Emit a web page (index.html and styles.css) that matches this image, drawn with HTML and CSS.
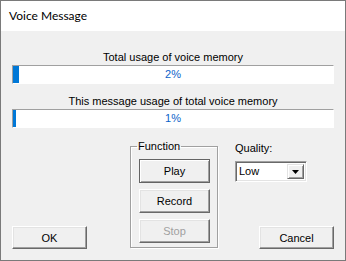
FILE: index.html
```html
<!DOCTYPE html>
<html>
<head>
<meta charset="utf-8">
<link rel="stylesheet" href="styles.css">
</head>
<body>
<div class="window">
  <div class="titlebar">Voice Message</div>
  <div class="content">
    <div class="label first">Total usage of voice memory</div>
    <div class="progress">
      <div class="fill" style="width: 2%"></div>
      <div class="pct">2%</div>
    </div>
    <div class="label second">This message usage of total voice memory</div>
    <div class="progress">
      <div class="fill" style="width: 1%"></div>
      <div class="pct">1%</div>
    </div>
    <div class="bottom">
      <button class="btn wide ok">OK</button>
      <fieldset class="group">
        <legend>Function</legend>
        <div class="group-buttons">
          <button class="btn fn default">Play</button>
          <button class="btn fn">Record</button>
          <button class="btn fn disabled">Stop</button>
        </div>
      </fieldset>
      <div class="right">
        <div class="qlabel">Quality:</div>
        <div class="combo">
          <div class="combo-value">Low</div>
          <div class="combo-btn">
            <svg width="7" height="4" viewBox="0 0 7 4"><path d="M0 0H7L3.5 4Z" fill="#000"/></svg>
          </div>
        </div>
        <button class="btn wide cancel">Cancel</button>
      </div>
    </div>
  </div>
</div>
</body>
</html>
```
FILE: styles.css
```css
html, body {
  margin: 0;
  padding: 0;
}
body {
  font-family: "Liberation Sans", Arial, sans-serif;
  font-size: 11px;
  color: #000;
}
.window {
  width: 346px;
  height: 261px;
  box-sizing: border-box;
  border: 1px solid #7a7a7a;
  background: #f0f0f0;
  display: flex;
  flex-direction: column;
}
.titlebar {
  height: 30px;
  line-height: 30px;
  background: #fff;
  padding-left: 8px;
  font-family: Lato, "Liberation Sans", sans-serif;
  font-size: 12px;
  color: #000;
}
.content {
  flex: 1;
  display: flex;
  flex-direction: column;
  padding: 0 11px 11px 11px;
}
.label {
  text-align: center;
  line-height: 13px;
  height: 13px;
  margin-bottom: 1px;
}
.label.first {
  margin-top: 20px;
}
.label.second {
  margin-top: 11px;
}
.progress {
  height: 19px;
  box-sizing: border-box;
  border-top: 1px solid #a0a0a0;
  border-left: 1px solid #a0a0a0;
  border-bottom: 1px solid #fff;
  border-right: 1px solid #fff;
  background: #fff;
  display: grid;
}
.progress > * {
  grid-area: 1 / 1;
}
.fill {
  background: #0078d7;
  min-width: 3px;
}
.pct {
  text-align: center;
  line-height: 17px;
  color: #0b63c9;
}
.bottom {
  flex: 1;
  display: flex;
  margin-top: 12px;
}
.btn {
  font-family: "Liberation Sans", Arial, sans-serif;
  font-size: 11px;
  color: #000;
  background: #f0f0f0;
  box-sizing: border-box;
  margin: 0;
  padding: 0;
  border-top: 1px solid #fff;
  border-left: 1px solid #fff;
  border-right: 1px solid #696969;
  border-bottom: 1px solid #696969;
  box-shadow: inset -1px -1px 0 #a0a0a0, inset 1px 1px 0 #e3e3e3;
}
.btn.wide {
  width: 75px;
  height: 23px;
}
.ok {
  align-self: flex-end;
}
.group {
  margin: 0 0 1px 43px;
  width: 88px;
  box-sizing: border-box;
  border: 1px solid #a0a0a0;
  box-shadow: 1px 1px 0 #fff, inset 1px 1px 0 #fff;
  padding: 6px 7px 4px 8px;
  min-width: 0;
}
.group legend {
  padding: 0 1px;
  margin-left: -2px;
  line-height: 13px;
}
.group-buttons {
  display: flex;
  flex-direction: column;
  gap: 6px;
}
.btn.fn {
  width: 71px;
  height: 24px;
}
.btn.default {
  border: 1px solid #646464;
  box-shadow: inset 1px 1px 0 #fff, inset -1px -1px 0 #a0a0a0;
}
.btn.disabled {
  color: #a0a0a0;
}
.right {
  margin-left: 17px;
  flex: 1;
  display: flex;
  flex-direction: column;
}
.qlabel {
  margin-top: 2px;
  line-height: 13px;
}
.combo {
  margin-top: 6px;
  width: 72px;
  height: 21px;
  box-sizing: border-box;
  border-top: 1px solid #a0a0a0;
  border-left: 1px solid #a0a0a0;
  border-right: 1px solid #fff;
  border-bottom: 1px solid #fff;
  box-shadow: inset 1px 1px 0 #696969, inset -1px -1px 0 #e3e3e3;
  background: #fff;
  display: flex;
  padding: 2px;
}
.combo-value {
  flex: 1;
  line-height: 15px;
  padding-left: 1px;
}
.combo-btn {
  width: 17px;
  box-sizing: border-box;
  background: #f0f0f0;
  border-top: 1px solid #e3e3e3;
  border-left: 1px solid #e3e3e3;
  border-right: 1px solid #696969;
  border-bottom: 1px solid #696969;
  box-shadow: inset 1px 1px 0 #fff, inset -1px -1px 0 #a0a0a0;
  display: flex;
  align-items: center;
  justify-content: center;
}
.cancel {
  margin-top: auto;
  align-self: flex-end;
}
```
